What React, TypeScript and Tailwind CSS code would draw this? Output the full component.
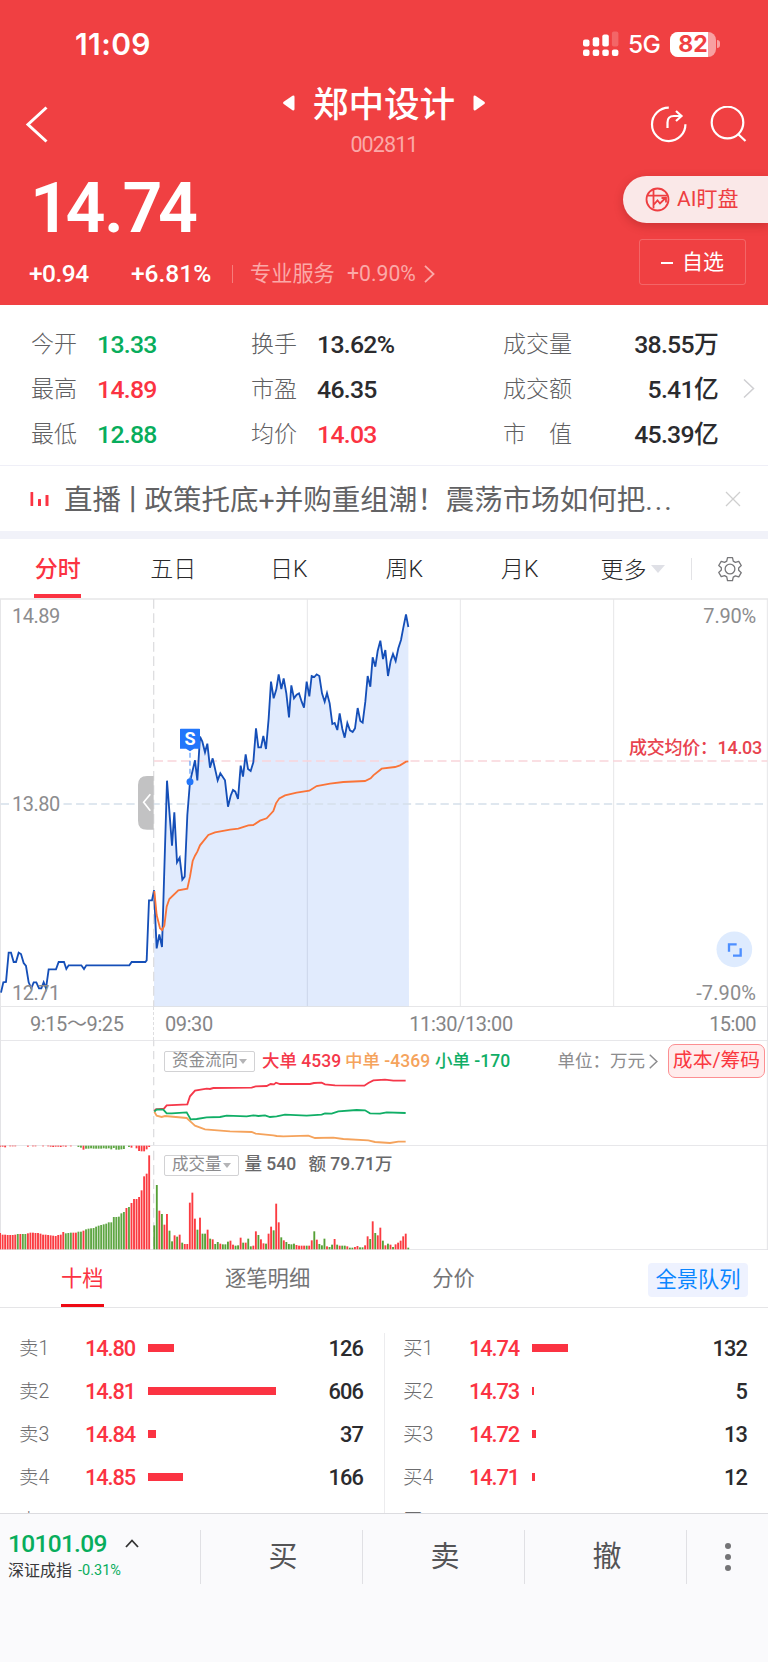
import { Fragment } from "react"

type Point = [number, number]

interface Quote {
  label: string
  value: string
  color: string
}

interface Level {
  label: string
  price: string
  width: number
  volume: string
}

const quotes: Quote[][] = [
  [
    { label: "今开", value: "13.33", color: "text-[#08ad5c]" },
    { label: "换手", value: "13.62%", color: "text-[#2b2b2e]" },
    { label: "成交量", value: "38.55万", color: "text-[#2b2b2e]" },
  ],
  [
    { label: "最高", value: "14.89", color: "text-[#fb3342]" },
    { label: "市盈", value: "46.35", color: "text-[#2b2b2e]" },
    { label: "成交额", value: "5.41亿", color: "text-[#2b2b2e]" },
  ],
  [
    { label: "最低", value: "12.88", color: "text-[#08ad5c]" },
    { label: "均价", value: "14.03", color: "text-[#fb3342]" },
    { label: "市　值", value: "45.39亿", color: "text-[#2b2b2e]" },
  ],
]

const sells: Level[] = [
  { label: "卖1", price: "14.80", width: 26, volume: "126" },
  { label: "卖2", price: "14.81", width: 128, volume: "606" },
  { label: "卖3", price: "14.84", width: 8, volume: "37" },
  { label: "卖4", price: "14.85", width: 35, volume: "166" },
  { label: "卖", price: "", width: 0, volume: "" },
]

const buys: Level[] = [
  { label: "买1", price: "14.74", width: 36, volume: "132" },
  { label: "买2", price: "14.73", width: 2, volume: "5" },
  { label: "买3", price: "14.72", width: 4, volume: "13" },
  { label: "买4", price: "14.71", width: 3, volume: "12" },
  { label: "买", price: "", width: 0, volume: "" },
]

// chart data is in 1/3 px units, panels are 2304 units wide
const auction: Point[] = [
  [3, 1193], [10, 1162], [18, 1161], [26, 1073], [33, 1073], [41, 1101], [48, 1101], [56, 1073], [63, 1077],
  [71, 1104], [78, 1113], [86, 1162], [94, 1180], [101, 1162], [109, 1162], [117, 1180], [124, 1180], [131, 1162],
  [138, 1180], [146, 1123], [168, 1123], [176, 1101], [192, 1101], [199, 1122], [206, 1111], [244, 1111],
  [252, 1122], [259, 1111], [388, 1111], [395, 1101], [436, 1101], [440, 1096], [447, 916], [456, 916], [462, 886],
]

const price: Point[] = [
  [462, 886], [470, 1060], [478, 1018], [486, 1056], [501, 557], [516, 752], [523, 652], [531, 802], [539, 788],
  [547, 854], [554, 845], [562, 660], [570, 560], [585, 496], [592, 556], [600, 425], [607, 440], [615, 472],
  [622, 446], [630, 518], [638, 490], [653, 556], [661, 535], [675, 556], [684, 635], [692, 602], [699, 585],
  [706, 590], [714, 612], [722, 512], [729, 545], [737, 478], [744, 522], [752, 528], [760, 502], [768, 400],
  [775, 457], [783, 457], [790, 423], [798, 462], [806, 370], [813, 260], [821, 310], [829, 283], [836, 238],
  [844, 282], [851, 250], [859, 295], [867, 367], [874, 271], [882, 310], [890, 299], [897, 295], [905, 320],
  [912, 338], [920, 260], [928, 304], [935, 243], [943, 246], [950, 238], [958, 243], [966, 295], [974, 320],
  [981, 294], [989, 325], [997, 387], [1004, 384], [1012, 405], [1019, 355], [1027, 402], [1034, 428], [1042, 384],
  [1050, 406], [1058, 411], [1065, 400], [1073, 339], [1081, 378], [1088, 383], [1096, 320], [1103, 243],
  [1111, 275], [1118, 187], [1126, 215], [1133, 168], [1141, 137], [1149, 192], [1156, 165], [1164, 243],
  [1172, 198], [1179, 177], [1187, 198], [1195, 160], [1203, 135], [1210, 98], [1218, 58], [1225, 96],
]

const average: Point[] = [
  [463, 888], [470, 960], [480, 1000], [486, 1005], [493, 992], [500, 935], [508, 912], [535, 886], [562, 881],
  [570, 845], [578, 798], [585, 782], [592, 770], [600, 751], [625, 720], [645, 712], [690, 704], [715, 701],
  [745, 691], [760, 690], [780, 677], [800, 670], [820, 648], [828, 625], [838, 610], [855, 601], [890, 593],
  [928, 587], [950, 573], [990, 566], [1030, 561], [1095, 558], [1112, 550], [1120, 541], [1145, 521], [1185, 516],
  [1200, 511], [1218, 500], [1225, 499],
]

const largeFlow: Point[] = [
  [463, 229], [467, 224], [492, 222], [500, 212], [562, 209], [570, 185], [585, 168], [620, 162], [630, 163],
  [640, 160], [755, 159], [767, 155], [800, 154], [812, 148], [822, 149], [828, 144], [840, 148], [930, 148],
  [942, 145], [965, 144], [975, 149], [1005, 152], [1093, 153], [1105, 145], [1120, 137], [1155, 135], [1180, 138],
  [1217, 138],
]

const smallFlow: Point[] = [
  [463, 231], [470, 224], [490, 225], [500, 236], [515, 236], [560, 233], [572, 254], [590, 253], [620, 248],
  [660, 247], [680, 243], [740, 245], [760, 242], [775, 244], [795, 242], [810, 247], [830, 245], [855, 240],
  [920, 243], [965, 240], [975, 236], [995, 237], [1015, 230], [1070, 226], [1095, 227], [1110, 236], [1140, 237],
  [1160, 233], [1217, 235],
]

const mediumFlow: Point[] = [
  [463, 231], [470, 243], [485, 247], [495, 244], [560, 250], [575, 264], [585, 273], [615, 284], [690, 290],
  [755, 292], [767, 297], [820, 302], [830, 304], [850, 305], [925, 303], [945, 310], [1000, 309], [1030, 313],
  [1105, 317], [1125, 322], [1170, 325], [1195, 321], [1217, 321],
]

// bar heights: positive is red, negative is green
const auctionVolume = [
  49, 44, 44, 43, 43, 43, 44, -46, 46, -46, -46, 48, 50, 50, 49, 49, 47, 44, 44, 43, 42, 41, 40, 43, 44, 52, -48,
  -49, -50, 50, 50, -53, -53, 56, -60, -62, -63, -64, -68, -71, -73, -75, -77, -81, -81, -97, -97, -98, -108, -112,
  124, -127, 139, 151, 151, 157, 177, 219, 227, 282,
]

const unmatched = [
  3, 3, 5, 0, 2, 2, 2, 0, 0, 0, 0, 3, 0, 2, 2, 0, 0, 2, 0, 2, 3, 4, 3, 3, 4, 2, 3, 0, 2, 0, 0, -4, -6, 12, -9,
  -9, -8, -9, -9, -9, -9, -8, -9, -8, -11, -7, -12, -12, -11, -10, 0, -4, 6, 0, 8, 16, 17, 17, 11, 4,
]

const volume = [
  -72, -193, 116, -106, 74, 106, -56, -24, 42, -38, 44, -20, 16, 16, 140, 170, 92, -59, 95, -47, -47, 59, -32, 30,
  -16, -22, 17, -15, -15, -23, 26, 14, -11, -12, 35, -20, 20, -32, -9, 11, 54, -43, 30, 18, -17, 47, 68, -57, 137,
  81, -36, 27, -22, -16, -15, -17, 13, 11, 11, 11, -11, 11, 27, -54, 29, -16, -12, -32, 9, -7, -14, 31, -14, 11,
  -11, -11, 9, -5, -5, 7, 10, -6, -6, 12, 39, -31, 84, -49, 42, 65, -26, 12, -17, 14, -7, 15, 20, 26, 39, 47, -5,
]

const toLine = (points: Point[]) => points.map((p) => p.join(",")).join(" ")

function Chevron({ className }: { className: string }) {
  return (
    <svg viewBox="0 0 12 20" className={className} fill="none" stroke="currentColor">
      <path d="M1 1l9.500 9-9.500 9" />
    </svg>
  )
}

function Header() {
  return (
    <header className="h-[305px] bg-[#f04042] text-white">
      <div className="h-[88px] flex items-center justify-between pl-[75px] pr-[48px] font-['Inter',sans-serif]">
        <span className="text-[30px] font-semibold leading-none tracking-[0.400px]">11:09</span>
        <div className="flex items-center">
          <svg width="36" height="26" viewBox="0 0 36 26" fill="currentColor">
            <rect x="0" y="8.500" width="6.500" height="7" rx="2" />
            <rect x="9.700" y="6.300" width="6.500" height="9.200" rx="2" />
            <rect x="19.300" y="3.500" width="6.500" height="12" rx="2" />
            <rect x="28.900" y="0.500" width="6.500" height="15" rx="2" opacity="0.2" />
            {[0, 9.7, 19.3, 28.9].map((x) => (
              <rect key={x} x={x} y="18.500" width="6.500" height="6.500" rx="2" />
            ))}
          </svg>
          <span className="ml-[9px] w-[34px] text-[24.500px] font-medium leading-none tracking-[-0.600px]">5G</span>
          <div className="ml-[8px] w-[46px] h-[25px] rounded-[8px] overflow-hidden bg-white/50 relative">
            <div className="w-[38px] h-full bg-white" />
            <span className="absolute inset-0 text-center text-[#f04042] text-[23px] leading-[25px] font-bold">82</span>
          </div>
          <div className="ml-[1px] w-[3px] h-[8px] rounded-r-full bg-white/50" />
        </div>
      </div>

      <div className="h-[80px] grid grid-cols-[200px_1fr_200px]">
        <svg width="24" height="38" viewBox="0 0 24 38" className="ml-[25px] mt-[18px]" fill="none" stroke="currentColor" strokeWidth="3">
          <path d="M21.500 1.500L3 18.500l18.500 17" />
        </svg>
        <div className="flex flex-col items-center">
          <div className="flex items-center mt-[-8px] h-[44px]">
            <svg width="12" height="16" viewBox="0 0 12 16" className="mt-[2px]" fill="currentColor">
              <path d="M0.700 6.800L9.500 0.800Q11.500 0 11.500 2v12q0 2-2 1.200L0.700 9Q-0.500 8 0.700 6.800z" />
            </svg>
            <h1 className="mx-[18px] text-[35.600px] leading-[44px] font-medium font-['Noto_Sans_CJK_SC',sans-serif]">郑中设计</h1>
            <svg width="12" height="16" viewBox="0 0 12 16" className="mt-[2px]" fill="currentColor">
              <path d="M11.300 6.800L2.500 0.800Q0.500 0 0.500 2v12q0 2 2 1.200L11.300 9Q12.500 8 11.300 6.800z" />
            </svg>
          </div>
          <span className="mt-[10px] text-[21.500px] leading-[22px] tracking-[-0.9px] text-[#fba9a8]">002811</span>
        </div>
        <div className="flex items-start gap-[23px] pt-[18px] pl-[82px]">
          <svg width="37" height="37" viewBox="0 0 37 37" fill="none" stroke="currentColor" strokeWidth="2.200">
            <path d="M18.800 1.700A16.700 16.700 0 1 0 35.400 18.200" />
            <path d="M17.500 22v-5.500q0-6.500 6.500-6.500h7M26 5l5.500 5-5.500 5" />
          </svg>
          <svg width="37" height="37" viewBox="0 0 37 37" fill="none" stroke="currentColor" strokeWidth="2.200">
            <circle cx="17.500" cy="16.500" r="15.800" />
            <path d="M28 28l7.500 7" />
          </svg>
        </div>
      </div>

      <div className="h-[137px] flex justify-between">
        <div>
          <div className="h-[78px] pl-[30px] text-[70px] font-semibold leading-[80px] tracking-[-4.500px]">
            14<span className="px-[3px]">.</span>74
          </div>
          <div className="h-[56px] pl-[29px] flex items-center text-[24.500px] font-medium">
            <span className="w-[102px] tracking-[-0.500px]">+0.94</span>
            <span className="w-[101px]">+6.81%</span>
            <i className="w-px h-[18px] bg-[#f77c7b]" />
            <div className="pl-[17px] flex items-center text-[21.200px] font-normal text-[#fba9a8]">
              <span className="w-[97px]">专业服务</span>
              <span>+0.90%</span>
              <Chevron className="ml-[8px] w-[11px] h-[18px] stroke-2" />
            </div>
          </div>
        </div>
        <div className="pt-[8px] flex flex-col items-end">
          <button className="w-[145px] h-[47px] pl-[22px] flex items-center gap-[7px] rounded-l-full bg-[#fae8e8] text-[#ee3e41] text-[21px] shadow-[0_3px_10px_rgba(120,20,20,0.3)]">
            <svg width="25" height="25" viewBox="0 0 25 25" fill="none" stroke="currentColor" strokeWidth="1.800">
              <circle cx="12.500" cy="12.500" r="11" />
              <path d="M8.500 2.500v19M2 8.700h21M8.500 18l4-4.500 2.500 3 6-6M16.500 11h4.500v4.500" />
            </svg>
            <span>AI盯盘</span>
          </button>
          <button className="mt-[16px] mr-[22px] w-[107px] h-[46px] flex items-center justify-center gap-[9px] rounded-[3px] border border-white/20 text-[21px]">
            <i className="w-[12px] h-[2px] bg-white mt-[2px]" />
            <span className="mt-[1px]">自选</span>
          </button>
        </div>
      </div>
    </header>
  )
}

function Quotes() {
  return (
    <section className="h-[161px] flex items-center border-b border-[#efeff7] pt-[2px]">
      <div className="w-[718px] pl-[31px] pt-[9px] grid grid-cols-[220px_252px_215px]">
        {quotes.map((row, i) => (
          <Fragment key={i}>
            {row.map((item, col) => (
              <div key={item.label} className="h-[45px] flex items-center">
                <span className={`text-[23px] font-light text-[#606062] leading-none -mt-[3px] ${col === 2 ? "flex-1" : "w-[66px]"}`}>
                  {item.label}
                </span>
                <span className={`text-[24.800px] font-medium tracking-[-0.700px] leading-none ${item.color}`}>{item.value}</span>
              </div>
            ))}
          </Fragment>
        ))}
      </div>
      <Chevron className="ml-[25px] mt-[5px] w-[12px] h-[21px] text-[#cfcfd2] stroke-[1.500]" />
    </section>
  )
}

function News() {
  return (
    <section className="h-[73px] flex items-center border-b-8 border-[#f1f2f9] pl-[30px]">
      <svg width="20" height="16" viewBox="0 0 20 16" fill="#fb3342">
        <rect x="0.500" y="1" width="2.700" height="14" rx="0.500" />
        <rect x="8" y="8" width="3" height="7" rx="0.500" />
        <rect x="15.500" y="4" width="3" height="11" rx="0.500" />
      </svg>
      <span className="ml-[14px] mt-[5px] w-[646px] whitespace-nowrap text-[28.500px] text-[#626264] leading-none">
        直播<span className="-mx-[2.500px]">丨</span>政策托底+并购重组潮！震荡市场如何把<span className="tracking-[2px]">...</span>
      </span>
      <svg width="16" height="16" viewBox="0 0 16 16" className="ml-[15px]" stroke="#cfcfcf" strokeWidth="1.300">
        <path d="M1 1l14 14M15 1L1 15" />
      </svg>
    </section>
  )
}

function ChartTabs() {
  return (
    <nav className="h-[59px] flex items-center text-[23px] text-[#29292b]">
      {["分时", "五日", "日K", "周K", "月K"].map((tab, i) => (
        <div key={tab} className={`w-[115.500px] h-full flex flex-col items-center ${i === 0 ? "font-medium text-[#fb3342]" : "font-light"}`}>
          <span className="h-[55px] leading-[61px]">{tab}</span>
          {i === 0 && <i className="w-[47px] h-[4px] bg-[#fb3342]" />}
        </div>
      ))}
      <span className="ml-[23px] leading-none mt-[3px] font-light">更多</span>
      <svg width="14" height="8" viewBox="0 0 14 8" className="ml-[4px]" fill="#dfe0e6">
        <path d="M0 0h14L7 8z" />
      </svg>
      <i className="ml-[26px] w-px h-[22px] bg-[#e3e3e6]" />
      <svg width="26" height="26" viewBox="0 0 24 24" className="ml-[25px]" fill="none" stroke="#77777a" strokeWidth="1.200">
        <path d="M9.700 1.500h4.600l.7 3.200 2 1.200 3.100-1 2.300 3.900-2.400 2.200v2.200l2.400 2.200-2.300 3.900-3.100-1-2 1.200-.7 3.200H9.700L9 19.300l-2-1.200-3.100 1-2.300-3.900L4 13V10.900L1.600 8.800l2.300-3.900 3.100 1 2-1.200z" strokeLinejoin="round" />
        <circle cx="12" cy="12" r="4.500" />
      </svg>
    </nav>
  )
}

function PriceChart() {
  return (
    <section className="relative h-[409px] text-[20px] leading-none text-[#8c8c8e] tracking-[-0.500px]">
      <svg viewBox="0 9 2304 1227" className="block w-full h-full" fill="none">
        <path d="M0 12H2304M0 1235H2304" stroke="#e6e6e8" strokeWidth="4" />
        <path d="M1.500 12V1236M922 12V1236M1381 12V1236M1841 12V1236M2302 12V1236" stroke="#e6e6e8" strokeWidth="3" />
        <polygon points={`462,1234 ${toLine(price)} 1227,1234`} fill="#4480f0" fillOpacity="0.16" />
        <path d="M461 12V1236" stroke="#dedee0" strokeWidth="4" strokeDasharray="29 14" />
        <path d="M2 627H2290" stroke="#d5e0ea" strokeWidth="5" strokeDasharray="25 12.700" />
        <path d="M462 498H2302" stroke="#f9d5da" strokeWidth="5" strokeDasharray="27 13.500" />
        <polyline points={toLine(auction)} stroke="#154fb8" strokeWidth="5.500" />
        <polyline points={toLine(price)} stroke="#154fb8" strokeWidth="5.500" />
        <polyline points={toLine(average)} stroke="#fa7438" strokeWidth="5.500" />
        <path d="M570 560V465" stroke="#6ea5f8" strokeWidth="4" strokeDasharray="15 9" />
        <circle cx="570" cy="560" r="10.500" fill="#2276fa" />
        <path d="M542 401h56q2 0 2 2v58h-18l-12 8-12-8h-18v-58q0-2 2-2z" fill="#2276fa" />
        <path d="M461 543h-20q-27 0-27 27v107q0 27 27 27h20z" fill="#c2c2c3" />
        <path d="M451 598l-20 24 20 25" stroke="#fff" strokeWidth="5" />
        <circle cx="2203" cy="1063" r="53.500" fill="#deebfe" />
        <path d="M2187 1070v-22h23M2222 1060v22h-23" stroke="#4d8fff" strokeWidth="7" />
      </svg>
      <span className="absolute left-[181px] top-[132px] w-[18px] text-center text-[18px] font-bold text-white tracking-normal">S</span>
      <span className="absolute left-[12px] top-[8px]">14.89</span>
      <span className="absolute left-[12px] top-[196px] bg-white pr-[3px]">13.80</span>
      <span className="absolute left-[12px] top-[385px]">12.71</span>
      <span className="absolute right-[12px] top-[8px] tracking-[-0.200px]">7.90%</span>
      <span className="absolute right-[12px] top-[385px] tracking-[0.100px]">-7.90%</span>
      <span className="absolute right-[6px] top-[141px] text-[18px] font-medium text-[#e8434e] whitespace-nowrap tracking-[-0.300px]">成交均价：14.03</span>
    </section>
  )
}

function TimeAxis() {
  return (
    <div className="h-[33px] flex items-center border-x border-[#e3e3e6] text-[20px] text-[#858587] tracking-[-0.400px] leading-none">
      <span className="w-[152px] pl-[29px]">9:15～9:25</span>
      <span className="w-[150px] pl-[11px] h-full leading-[35px] border-l border-dashed border-[#dedee0]">09:30</span>
      <span className="w-[316px] text-center pt-[1px]">11:30/13:00</span>
      <span className="flex-1 text-right pr-[11px] pt-[1px] tracking-[-0.600px]">15:00</span>
    </div>
  )
}

function Picker({ label }: { label: string }) {
  return (
    <span className="h-[21px] px-[7px] flex items-center gap-[1px] border border-[#d2d2d4] rounded-[2px] text-[16.500px] font-normal text-[#8c8c8e]">
      {label}
      <svg width="8" height="5" viewBox="0 0 8 5" fill="#b4b4b6">
        <path d="M0 0h8L4 5z" />
      </svg>
    </span>
  )
}

function MoneyFlow() {
  return (
    <section className="relative h-[105px]">
      <svg viewBox="0 16 2304 315" className="block w-full h-full" fill="none">
        <path d="M0 17H2304" stroke="#e3e3e6" strokeWidth="3" />
        <path d="M1.500 16V331M2302 16V331" stroke="#e3e3e6" strokeWidth="3" />
        <path d="M461 10V331" stroke="#dedee0" strokeWidth="4" strokeDasharray="25 14" />
        <polyline points={toLine(largeFlow)} stroke="#f5384a" strokeWidth="5.500" />
        <polyline points={toLine(mediumFlow)} stroke="#f5a35c" strokeWidth="5.500" />
        <polyline points={toLine(smallFlow)} stroke="#10ae66" strokeWidth="5.500" />
      </svg>
      <div className="absolute left-0 right-0 top-[4px] h-[34px] pl-[164px] pr-[3px] flex items-center leading-none font-medium text-[17.500px]">
        <Picker label="资金流向" />
        <span className="ml-[7px] mt-[2px] w-[83px] text-[#f5384a]">大单 4539</span>
        <span className="mt-[2px] w-[90px] text-[#f5a35c]">中单 -4369</span>
        <span className="mt-[2px] text-[#10ae66]">小单 -170</span>
        <span className="ml-auto mt-[2px] font-normal text-[#8c8c8e]">单位：万元</span>
        <Chevron className="ml-[4px] mr-[10px] w-[9px] h-[15px] text-[#8c8c8e] stroke-2" />
        <button className="w-[97px] h-[34px] rounded-[7px] border border-[#fc8f92] bg-[#ffecec] font-normal text-[#fa3840] text-[19.800px] leading-none whitespace-nowrap">
          成本/筹码
        </button>
      </div>
    </section>
  )
}

function VolumeChart() {
  return (
    <section className="relative h-[105px]">
      <svg viewBox="0 331 2304 315" className="block w-full h-full">
        <path d="M0 332H2304M0 645H2304M1.500 331V646M2302 331V646" stroke="#e3e3e6" strokeWidth="3" />
        <path d="M461 348V646" stroke="#dedee0" strokeWidth="4" strokeDasharray="29 14" />
        {auctionVolume.map((v, i) => (
          <rect key={i} x={i * 7.58 - 2.5} y={644 - Math.abs(v)} width="5.600" height={Math.abs(v)} fill={v > 0 ? "#fb3b41" : "#5fa644"} />
        ))}
        {unmatched.map((v, i) => (
          <rect key={i} x={i * 7.58 - 2.5} y="333" width="5.600" height={Math.abs(v)} fill={v > 0 ? "#fb3b41" : "#5fa644"} />
        ))}
        {volume.map((v, i) => (
          <rect key={i} x={i * 7.62 + 460} y={644 - Math.abs(v)} width="5.600" height={Math.abs(v)} fill={v > 0 ? "#fb3b41" : "#56a036"} />
        ))}
      </svg>
      <div className="absolute left-[164px] top-[8px] h-[24px] flex items-center leading-none font-medium text-[17.500px] text-[#68686a]">
        <Picker label="成交量" />
        <span className="ml-[6px] w-[64px]">量 540</span>
        <span>额 79.71万</span>
      </div>
    </section>
  )
}

function BookTabs() {
  return (
    <nav className="h-[58px] flex border-b border-[#e5e5e7] text-[21.300px] leading-[58px] text-[#747476]">
      <div className="ml-[61px] w-[43px] h-[57px] flex flex-col text-[#fb3342]">
        <span className="h-[54px]">十档</span>
        <i className="h-[3px] bg-[#ee0a14]" />
      </div>
      <span className="ml-[121px]">逐笔明细</span>
      <span className="ml-[122px]">分价</span>
      <span className="ml-auto mr-[20px] mt-[13px] w-[100px] h-[34px] rounded-[4px] bg-[#eef2ff] text-center leading-[34px] text-[#0b86ff]">全景队列</span>
    </nav>
  )
}

function Levels({ levels }: { levels: Level[] }) {
  return (
    <div className="w-1/2">
      {levels.map((level) => (
        <div key={level.label} className="h-[43px] pl-[19px] pr-[21px] flex items-center leading-none">
          <span className="w-[66px] pt-[2px] text-[19.500px] font-light text-[#6c6c6e]">{level.label}</span>
          <span className="w-[63px] pt-[2px] text-[21.800px] font-medium tracking-[-1.100px] text-[#fb3342]">{level.price}</span>
          <i className="h-[8px] bg-[#fb3342]" style={{ width: level.width }} />
          <span className="flex-1 pt-[2px] text-right text-[21.800px] font-medium tracking-[-0.900px] text-[#2b2b2e]">{level.volume}</span>
        </div>
      ))}
    </div>
  )
}

function BottomBar() {
  return (
    <footer className="h-[149px] pt-[16px] flex items-start border-t border-[#dcdce0] bg-[#fafafc] text-[29px] text-[#545456] leading-[54px]">
      <div className="w-[200px] pl-[8px] leading-none">
        <div className="flex items-center h-[28px] text-[24.500px] font-medium tracking-[-0.700px] text-[#08ad5c]">
          <span className="w-[117px]">10101.09</span>
          <svg width="14" height="9" viewBox="0 0 14 9" className="-mt-[2px]" fill="none" stroke="#333" strokeWidth="1.800">
            <path d="M1 8l6-6.500L13 8" />
          </svg>
        </div>
        <div className="flex items-center h-[26px] text-[16px] text-[#39393b]">
          <span className="w-[70px]">深证成指</span>
          <span className="text-[14.500px] text-[#08ad5c]">-0.31%</span>
        </div>
      </div>
      {["买", "卖", "撤"].map((action) => (
        <button key={action} className="w-[162px] h-[54px] border-l border-[#e0e0e4] pl-[3px]">{action}</button>
      ))}
      <div className="flex-1 h-[54px] border-l border-[#e0e0e4] flex flex-col items-center justify-center gap-[5px]">
        {[0, 1, 2].map((dot) => (
          <i key={dot} className="w-[6px] h-[6px] rounded-full bg-[#747476]" />
        ))}
      </div>
    </footer>
  )
}

export default function App() {
  return (
    <main className="w-[768px] h-[1662px] overflow-hidden flex flex-col bg-white font-['Roboto','Noto_Sans_CJK_SC',sans-serif]">
      <Header />
      <Quotes />
      <News />
      <ChartTabs />
      <PriceChart />
      <TimeAxis />
      <MoneyFlow />
      <VolumeChart />
      <BookTabs />
      <section className="h-[205px] pt-[18px] flex overflow-hidden relative">
        <Levels levels={sells} />
        <i className="absolute left-[384px] top-[25px] bottom-0 w-px bg-[#ececee]" />
        <Levels levels={buys} />
      </section>
      <BottomBar />
    </main>
  )
}
